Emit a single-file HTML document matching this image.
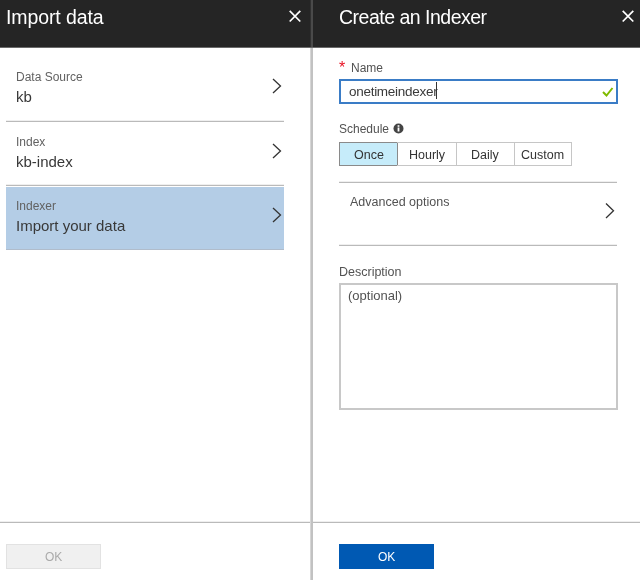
<!DOCTYPE html>
<html><head><meta charset="utf-8">
<style>
*{box-sizing:border-box;margin:0;padding:0}
.a{will-change:transform}
html,body{width:640px;height:580px;overflow:hidden;background:#fff;font-family:"Liberation Sans",sans-serif}
.a{position:absolute;white-space:nowrap;line-height:1}
.hdr{position:absolute;top:0;height:47px;background:#252525}
.sep{position:absolute;height:1px;background:#bababa;box-shadow:0 -1px 0 #efefef}
</style></head><body>
<!-- headers -->
<div class="hdr" style="left:0;width:640px"></div>
<div style="position:absolute;left:0;top:47px;width:640px;height:1px;background:#6a6a6a"></div>
<div class="a" style="left:6px;top:8px;font-size:19.5px;color:#fff;letter-spacing:-0.1px">Import data</div>
<div class="a" style="left:339px;top:8px;font-size:19.5px;color:#fff;letter-spacing:-0.5px">Create an Indexer</div>
<svg style="position:absolute;left:288px;top:9px" width="14" height="14" viewBox="0 0 14 14"><path d="M1.7 1.9L12.3 12.5M12.3 1.9L1.7 12.5" stroke="#fff" stroke-width="1.7"/></svg>
<svg style="position:absolute;left:621px;top:9px" width="14" height="14" viewBox="0 0 14 14"><path d="M1.7 1.9L12.3 12.5M12.3 1.9L1.7 12.5" stroke="#fff" stroke-width="1.7"/></svg>
<!-- divider -->
<div style="position:absolute;left:310px;top:0;width:3px;height:47px;background:linear-gradient(to right,#303030 0,#303030 33%,#4a4a4a 33%)"></div>
<div style="position:absolute;left:310px;top:48px;width:3px;height:532px;background:linear-gradient(to right,#d6d6d6 0,#d6d6d6 33%,#c2c2c2 33%)"></div>

<!-- left list -->
<div class="a" style="left:16px;top:71px;font-size:12px;color:#626262">Data Source</div>
<div class="a" style="left:16px;top:89px;font-size:15px;color:#383838">kb</div>
<svg style="position:absolute;left:270px;top:77px" width="14" height="18" viewBox="0 0 14 18"><path d="M3 2L10.5 9L3 16" fill="none" stroke="#333" stroke-width="1.3"/></svg>
<div class="sep" style="left:6px;top:121px;width:278px"></div>

<div class="a" style="left:16px;top:135.5px;font-size:12px;color:#626262">Index</div>
<div class="a" style="left:16px;top:154px;font-size:15px;color:#383838">kb-index</div>
<svg style="position:absolute;left:270px;top:142px" width="14" height="18" viewBox="0 0 14 18"><path d="M3 2L10.5 9L3 16" fill="none" stroke="#333" stroke-width="1.3"/></svg>
<div class="sep" style="left:6px;top:185px;width:278px"></div>

<div style="position:absolute;left:6px;top:187px;width:278px;height:62px;background:#b4cde6"></div><div style="position:absolute;left:6px;top:249px;width:278px;height:1px;background:#b0bccb"></div>
<div class="a" style="left:16px;top:200px;font-size:12px;color:#626262">Indexer</div>
<div class="a" style="left:16px;top:218px;font-size:15px;color:#383838">Import your data</div>
<svg style="position:absolute;left:270px;top:206px" width="14" height="18" viewBox="0 0 14 18"><path d="M3 2L10.5 9L3 16" fill="none" stroke="#333" stroke-width="1.3"/></svg>

<!-- left footer -->
<div class="sep" style="left:0;top:522px;width:310px"></div>
<div style="position:absolute;left:6px;top:544px;width:95px;height:25px;background:#f0f0f0;border:1px solid #e2e2e2"></div>
<div class="a" style="left:45px;top:551px;font-size:12px;color:#aaa">OK</div>

<!-- right panel -->
<div class="a" style="left:339px;top:59.5px;font-size:16px;color:#e81123">*</div>
<div class="a" style="left:351px;top:61.5px;font-size:12px;color:#525252">Name</div>
<div style="position:absolute;left:339px;top:79px;width:279px;height:25px;border:2px solid #3a7cc6"></div>
<div class="a" style="left:348.5px;top:85px;font-size:13.5px;color:#3a3a3a;letter-spacing:-0.28px">onetimeindexer</div>
<div style="position:absolute;left:436px;top:82px;width:1px;height:17px;background:#333"></div>
<svg style="position:absolute;left:600px;top:85px" width="16" height="14" viewBox="0 0 16 14"><path d="M3 7L6.5 10.5L12.5 3" fill="none" stroke="#7fba00" stroke-width="2"/></svg>

<div class="a" style="left:339px;top:122.5px;font-size:12px;color:#525252">Schedule</div>
<svg style="position:absolute;left:392.5px;top:123px" width="11" height="11" viewBox="0 0 11 11"><circle cx="5.5" cy="5.5" r="5" fill="#444"/><rect x="4.6" y="4.5" width="1.8" height="4" fill="#fff"/><rect x="4.6" y="2.2" width="1.8" height="1.6" fill="#fff"/></svg>

<div style="position:absolute;left:339px;top:142px;width:59px;height:24px;background:#c6ecfa;border:1px solid #8a8a8a"></div>
<div style="position:absolute;left:397px;top:142px;width:60px;height:24px;border:1px solid #c6c6c6;border-left:0"></div>
<div style="position:absolute;left:456px;top:142px;width:59px;height:24px;border:1px solid #c6c6c6"></div>
<div style="position:absolute;left:514px;top:142px;width:58px;height:24px;border:1px solid #c6c6c6;border-left:0"></div>
<div class="a" style="left:354px;top:148.5px;font-size:12.5px;color:#333">Once</div>
<div class="a" style="left:408.5px;top:148.5px;font-size:12.5px;color:#333">Hourly</div>
<div class="a" style="left:471px;top:148.5px;font-size:12.5px;color:#333">Daily</div>
<div class="a" style="left:521px;top:148.5px;font-size:12.5px;color:#333">Custom</div>

<div class="sep" style="left:339px;top:182px;width:278px"></div>
<div class="a" style="left:350px;top:195.5px;font-size:12.5px;color:#525252">Advanced options</div>
<svg style="position:absolute;left:603px;top:202px" width="14" height="18" viewBox="0 0 14 18"><path d="M3 1.5L10.5 8.8L3 16" fill="none" stroke="#333" stroke-width="1.3"/></svg>
<div class="sep" style="left:339px;top:245px;width:278px"></div>

<div class="a" style="left:339px;top:265.8px;font-size:12.5px;color:#525252">Description</div>
<div style="position:absolute;left:339px;top:283px;width:279px;height:127px;border:2px solid #c8c8c8"></div>
<div class="a" style="left:348px;top:288.5px;font-size:13px;color:#525252">(optional)</div>

<div class="sep" style="left:313px;top:522px;width:327px"></div>
<div style="position:absolute;left:339px;top:544px;width:95px;height:25px;background:#0059b3"></div>
<div class="a" style="left:378px;top:551px;font-size:12px;color:#fff">OK</div>
</body></html>
